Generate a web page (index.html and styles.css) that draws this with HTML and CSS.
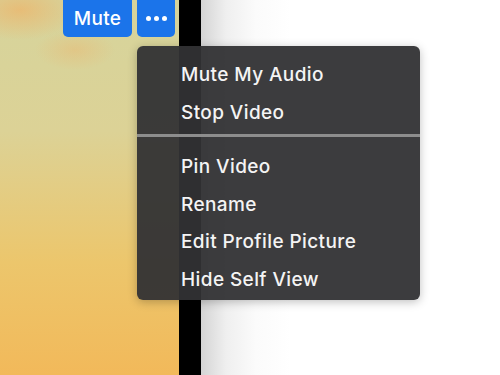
FILE: index.html
```html
<!DOCTYPE html>
<html lang="en">
<head>
    <meta charset="UTF-8">
    <title>Self View Menu</title>
    <link rel="stylesheet" href="styles.css">
</head>
<body>

<div class="screen">
    <div class="video">
        <div class="video-controls">
            <button class="btn btn-mute">Mute</button>
            <button class="btn btn-more">
                <span class="dot"></span><span class="dot"></span><span class="dot"></span>
            </button>
        </div>
    </div>
    <div class="divider"></div>
    <div class="page"></div>

    <div class="menu">
        <div class="menu-item">Mute My Audio</div>
        <div class="menu-item">Stop Video</div>
        <div class="menu-sep"></div>
        <div class="menu-item">Pin Video</div>
        <div class="menu-item">Rename</div>
        <div class="menu-item">Edit Profile Picture</div>
        <div class="menu-item">Hide Self View</div>
    </div>
</div>

</body>
</html>
```

FILE: styles.css
```css
:root {
    --blue: #1b74ea;
    --menu-bg: rgba(50, 50, 52, 0.95);
    --menu-text: #f4f4f4;
    --sep: #8d8d8d;
}

* {
    margin: 0;
    padding: 0;
    box-sizing: border-box;
}

body {
    font-family: 'Inter', 'Noto Sans', sans-serif;
    width: 500px;
    height: 375px;
    overflow: hidden;
    background: #fff;
}

.screen {
    position: relative;
    display: flex;
    width: 500px;
    height: 375px;
}

.video {
    width: 179px;
    background:
        radial-gradient(ellipse 60px 30px at 20px 10px, rgba(245, 170, 90, 0.55), transparent),
        radial-gradient(ellipse 40px 20px at 75px 50px, rgba(240, 175, 100, 0.35), transparent),
        linear-gradient(180deg, #d6d49c 0%, #dcd296 35%, #ecc66c 70%, #f2b95a 100%);
}

.video-controls {
    display: flex;
    gap: 5px;
    padding-left: 63px;
    margin-top: -6px;
}

.btn {
    background: var(--blue);
    color: #fff;
    border: none;
    border-radius: 5px;
    height: 43px;
    padding-top: 6px;
    font-family: inherit;
    display: flex;
    align-items: center;
    justify-content: center;
}

.btn-mute {
    width: 69px;
    font-size: 19px;
    font-weight: 500;
    letter-spacing: 0.3px;
}

.btn-more {
    width: 38px;
    gap: 3px;
}

.dot {
    width: 5px;
    height: 5px;
    border-radius: 50%;
    background: #fff;
}

.divider {
    width: 22px;
    background: #000;
}

.page {
    flex: 1;
    background: linear-gradient(90deg, #d4d4d4 0%, #efefef 25px, #fbfbfb 55px, #fff 90px);
}

.menu {
    position: absolute;
    left: 137px;
    top: 46px;
    width: 283px;
    height: 254px;
    background: var(--menu-bg);
    border-radius: 6px;
    box-shadow: 0 2px 10px rgba(0, 0, 0, 0.25);
    padding: 10px 0 0;
}

.menu-item {
    padding-left: 44px;
    height: 37.5px;
    line-height: 37.5px;
    color: var(--menu-text);
    font-size: 19px;
    font-weight: 500;
    letter-spacing: 0.4px;
}

.menu-sep {
    height: 3px;
    background: var(--sep);
    margin: 3px 0 11px;
}
```
